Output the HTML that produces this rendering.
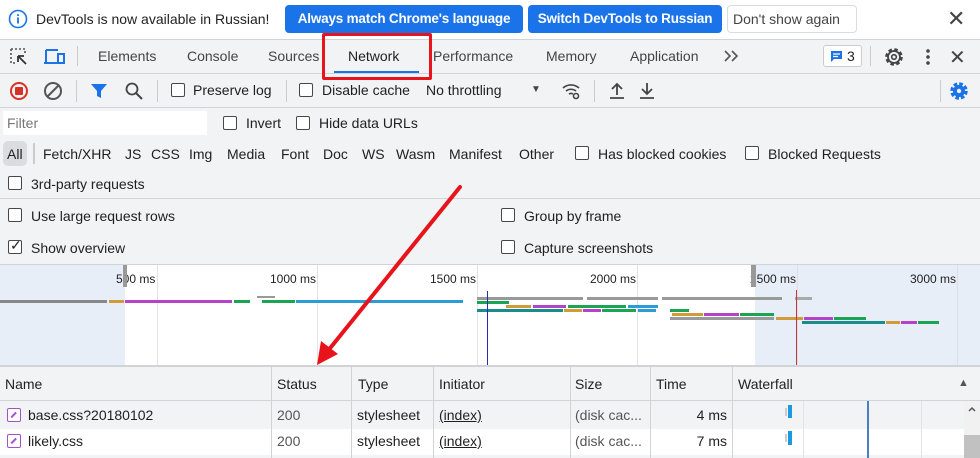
<!DOCTYPE html>
<html><head><meta charset="utf-8"><style>
*{box-sizing:border-box;margin:0;padding:0}
body{width:980px;height:458px;overflow:hidden;background:#f1f3f4;font-family:"Liberation Sans",sans-serif;font-size:14px;color:#1f1f1f;position:relative}
.a{position:absolute;white-space:nowrap}
.hl{position:absolute;left:0;width:980px;height:1px;background:#d0d3d7}
.cb{position:absolute;width:14px;height:14px;border:1.5px solid #474747;border-radius:2px;background:#fff}
.btn{position:absolute;top:5px;height:28px;border-radius:4px;background:#1a73e8;color:#fff;font-weight:bold;font-size:13.5px;line-height:28px;text-align:center;white-space:nowrap;overflow:hidden;letter-spacing:-0.2px}
.bar{position:absolute;height:3px}
.vl{position:absolute;width:1px}
</style></head><body>
<!-- infobar -->
<div class="a" style="left:0;top:0;width:980px;height:39px;background:#fff"></div>
<svg class="a" style="left:8px;top:9px" width="20" height="20" viewBox="0 0 20 20"><circle cx="10" cy="10" r="8.5" fill="none" stroke="#1a73e8" stroke-width="1.6"/><rect x="9.1" y="8.5" width="1.8" height="6" fill="#1a73e8"/><rect x="9.1" y="5.2" width="1.8" height="1.8" fill="#1a73e8"/></svg>
<div class="a" style="left:36px;top:11px">DevTools is now available in Russian!</div>
<div class="btn" style="left:285px;width:238px">Always match Chrome's language</div>
<div class="btn" style="left:528px;width:194px">Switch DevTools to Russian</div>
<div class="a" style="left:727px;top:5px;width:130px;height:28px;border:1px solid #dadce0;border-radius:4px;background:#fff;line-height:26px;padding-left:5px;color:#444">Don't show again</div>
<div class="a" style="left:947px;top:6px;font-size:22px;color:#444">✕</div>
<div class="hl" style="top:39px"></div>
<!-- tabs -->
<svg class="a" style="left:9px;top:47px" width="20" height="20" viewBox="0 0 20 20"><path d="M2 2h14v6M2 2v14h6" fill="none" stroke="#555" stroke-width="1.6" stroke-dasharray="2 2"/><path d="M17 17L9 9M9 9v6M9 9h6" fill="none" stroke="#333" stroke-width="1.8"/></svg>
<svg class="a" style="left:43px;top:48px" width="22" height="18" viewBox="0 0 22 18"><path d="M3 2h12M3 2v13M1 15h13" fill="none" stroke="#1a73e8" stroke-width="2"/><rect x="15" y="6" width="6" height="9" fill="none" stroke="#1a73e8" stroke-width="2"/></svg>
<div class="a" style="left:77px;top:46px;width:1px;height:20px;background:#ccc"></div>
<div class="a" style="left:98px;top:48px;color:#444">Elements</div>
<div class="a" style="left:187px;top:48px;color:#444">Console</div>
<div class="a" style="left:268px;top:48px;color:#444">Sources</div>
<div class="a" style="left:348px;top:48px;color:#1f1f1f">Network</div>
<div class="a" style="left:334px;top:71px;width:85px;height:2px;background:#1a73e8"></div>
<div class="a" style="left:433px;top:48px;color:#444">Performance</div>
<div class="a" style="left:546px;top:48px;color:#444">Memory</div>
<div class="a" style="left:630px;top:48px;color:#444">Application</div>
<svg class="a" style="left:723px;top:49px" width="18" height="14" viewBox="0 0 18 14"><path d="M2 2l5 5-5 5M9 2l5 5-5 5" fill="none" stroke="#555" stroke-width="1.6"/></svg>
<div class="a" style="left:823px;top:45px;width:39px;height:22px;border:1px solid #ccc;border-radius:3px;background:#fff"></div>
<svg class="a" style="left:830px;top:50px" width="13" height="13" viewBox="0 0 13 13"><path d="M1 1h11v8H4l-3 3z" fill="#1a73e8"/><path d="M3 4h7M3 6.5h5" stroke="#fff" stroke-width="1.2"/></svg>
<div class="a" style="left:847px;top:48px">3</div>
<div class="a" style="left:870px;top:46px;width:1px;height:20px;background:#ccc"></div>
<svg class="a" style="left:883px;top:46px" width="22" height="22" viewBox="0 0 22 22"><circle cx="11" cy="11" r="7.5" fill="none" stroke="#444" stroke-width="2.6" stroke-dasharray="3.5 2.4"/><circle cx="11" cy="11" r="6" fill="none" stroke="#444" stroke-width="1.8"/><circle cx="11" cy="11" r="2.3" fill="none" stroke="#444" stroke-width="1.6"/></svg>
<div class="a" style="left:926px;top:48px;width:4px;height:18px;background:radial-gradient(circle,#444 1.6px,transparent 2px) 0 0/4px 6px"></div>
<div class="a" style="left:949px;top:45px;font-size:20px;color:#444">✕</div>
<div class="hl" style="top:73px"></div>
<div class="a" style="left:322px;top:33px;width:110px;height:47px;border:3px solid #e8141b;border-radius:2px"></div>
<!-- toolbar -->
<svg class="a" style="left:9px;top:81px" width="20" height="20" viewBox="0 0 20 20"><circle cx="10" cy="10" r="8" fill="none" stroke="#d93025" stroke-width="2"/><rect x="6" y="6" width="8" height="8" rx="1" fill="#d93025"/></svg>
<svg class="a" style="left:43px;top:81px" width="20" height="20" viewBox="0 0 20 20"><circle cx="10" cy="10" r="8" fill="none" stroke="#555" stroke-width="2"/><path d="M4.5 15.5L15.5 4.5" stroke="#555" stroke-width="2"/></svg>
<div class="a" style="left:76px;top:80px;width:1px;height:22px;background:#ccc"></div>
<svg class="a" style="left:90px;top:82px" width="18" height="18" viewBox="0 0 18 18"><path d="M1 2h16l-6 7v7l-4 -2V9z" fill="#1a73e8"/></svg>
<svg class="a" style="left:124px;top:81px" width="20" height="20" viewBox="0 0 20 20"><circle cx="8" cy="8" r="5.5" fill="none" stroke="#444" stroke-width="1.8"/><path d="M12 12l6 6" stroke="#444" stroke-width="2"/></svg>
<div class="a" style="left:157px;top:80px;width:1px;height:22px;background:#ccc"></div>
<div class="cb" style="left:171px;top:83px"></div><div class="a" style="left:193px;top:82px">Preserve log</div>
<div class="a" style="left:286px;top:80px;width:1px;height:22px;background:#ccc"></div>
<div class="cb" style="left:299px;top:83px"></div><div class="a" style="left:322px;top:82px">Disable cache</div>
<div class="a" style="left:426px;top:82px">No throttling</div>
<div class="a" style="left:531px;top:84px;font-size:10px;color:#444">▼</div>
<svg class="a" style="left:561px;top:81px" width="22" height="20" viewBox="0 0 22 20"><path d="M2 7a12 12 0 0 1 16 0M5 10a8 8 0 0 1 10 0M8 13a4 4 0 0 1 4 0" fill="none" stroke="#444" stroke-width="1.6"/><circle cx="15" cy="15" r="2.5" fill="none" stroke="#444" stroke-width="1.6"/></svg>
<div class="a" style="left:594px;top:80px;width:1px;height:22px;background:#ccc"></div>
<svg class="a" style="left:608px;top:81px" width="18" height="20" viewBox="0 0 18 20"><path d="M9 14V3M4 8l5-5 5 5M2 17h14" fill="none" stroke="#444" stroke-width="1.8"/></svg>
<svg class="a" style="left:638px;top:81px" width="18" height="20" viewBox="0 0 18 20"><path d="M9 2v11M4 8l5 5 5-5M2 17h14" fill="none" stroke="#444" stroke-width="1.8"/></svg>
<div class="a" style="left:940px;top:80px;width:1px;height:22px;background:#ccc"></div>
<svg class="a" style="left:948px;top:80px" width="22" height="22" viewBox="0 0 22 22"><circle cx="11" cy="11" r="7" fill="none" stroke="#1a73e8" stroke-width="3.5" stroke-dasharray="3.5 2"/><circle cx="11" cy="11" r="6" fill="#1a73e8"/><circle cx="11" cy="11" r="2.2" fill="#f1f3f4"/></svg>
<div class="hl" style="top:107px"></div>
<!-- filter -->
<div class="a" style="left:3px;top:111px;width:204px;height:24px;background:#fff"></div>
<div class="a" style="left:7px;top:115px;color:#777">Filter</div>
<div class="cb" style="left:223px;top:116px"></div><div class="a" style="left:246px;top:115px">Invert</div>
<div class="cb" style="left:296px;top:116px"></div><div class="a" style="left:319px;top:115px">Hide data URLs</div>
<div class="a" style="left:3px;top:141px;width:24px;height:25px;background:#dadce0;border-radius:5px"></div>
<div class="a" style="left:7px;top:146px">All</div>
<div class="a" style="left:33px;top:143px;width:2px;height:21px;background:#ccc"></div>
<div class="a" style="left:43px;top:146px">Fetch/XHR</div>
<div class="a" style="left:125px;top:146px">JS</div>
<div class="a" style="left:151px;top:146px">CSS</div>
<div class="a" style="left:189px;top:146px">Img</div>
<div class="a" style="left:227px;top:146px">Media</div>
<div class="a" style="left:281px;top:146px">Font</div>
<div class="a" style="left:323px;top:146px">Doc</div>
<div class="a" style="left:362px;top:146px">WS</div>
<div class="a" style="left:396px;top:146px">Wasm</div>
<div class="a" style="left:449px;top:146px">Manifest</div>
<div class="a" style="left:519px;top:146px">Other</div>
<div class="cb" style="left:575px;top:146px"></div><div class="a" style="left:598px;top:146px">Has blocked cookies</div>
<div class="cb" style="left:745px;top:146px"></div><div class="a" style="left:768px;top:146px">Blocked Requests</div>
<div class="cb" style="left:8px;top:176px"></div><div class="a" style="left:31px;top:176px">3rd-party requests</div>
<div class="hl" style="top:198px"></div>
<div class="cb" style="left:8px;top:208px"></div><div class="a" style="left:31px;top:208px">Use large request rows</div>
<div class="cb" style="left:8px;top:240px"></div><div class="a" style="left:10px;top:237px;font-size:14px">✓</div><div class="a" style="left:31px;top:240px">Show overview</div>
<div class="cb" style="left:501px;top:208px"></div><div class="a" style="left:524px;top:208px">Group by frame</div>
<div class="cb" style="left:501px;top:240px"></div><div class="a" style="left:524px;top:240px">Capture screenshots</div>
<div class="hl" style="top:264px"></div>
<!-- overview -->
<div class="a" style="left:0;top:265px;width:980px;height:101px;background:#fff"></div>
<div class="a" style="left:0;top:265px;width:125px;height:101px;background:#e8eef8"></div>
<div class="a" style="left:755px;top:265px;width:225px;height:101px;background:#e8eef8"></div>
<div class="vl" style="left:157px;top:265px;height:101px;background:#e3e3e3"></div>
<div class="vl" style="left:317px;top:265px;height:101px;background:#e3e3e3"></div>
<div class="vl" style="left:477px;top:265px;height:101px;background:#e3e3e3"></div>
<div class="vl" style="left:637px;top:265px;height:101px;background:#e3e3e3"></div>
<div class="vl" style="left:797px;top:265px;height:101px;background:#dcdfe6"></div>
<div class="vl" style="left:957px;top:265px;height:101px;background:#dcdfe6"></div>
<div class="a" style="left:116px;top:272px;font-size:12px">500 ms</div>
<div class="a" style="left:270px;top:272px;font-size:12px">1000 ms</div>
<div class="a" style="left:430px;top:272px;font-size:12px">1500 ms</div>
<div class="a" style="left:590px;top:272px;font-size:12px">2000 ms</div>
<div class="a" style="left:750px;top:272px;font-size:12px">2500 ms</div>
<div class="a" style="left:910px;top:272px;font-size:12px">3000 ms</div>
<div class="a" style="left:123px;top:265px;width:4px;height:22px;background:#999"></div>
<div class="a" style="left:751px;top:265px;width:5px;height:22px;background:#999"></div>
<div class="bar" style="left:0;top:300px;width:107px;background:#888"></div>
<div class="bar" style="left:109px;top:300px;width:15px;background:#d19a3a"></div>
<div class="bar" style="left:125px;top:300px;width:107px;background:#b543c9"></div>
<div class="bar" style="left:234px;top:300px;width:16px;background:#1aa454"></div>
<div class="bar" style="left:257px;top:296px;width:18px;height:2px;background:#999"></div>
<div class="bar" style="left:262px;top:300px;width:33px;background:#1aa454"></div>
<div class="bar" style="left:296px;top:300px;width:167px;background:#2d9bd6"></div>
<div class="bar" style="left:477px;top:297px;width:106px;background:#999"></div>
<div class="bar" style="left:587px;top:297px;width:71px;background:#999"></div>
<div class="bar" style="left:662px;top:297px;width:120px;background:#999"></div>
<div class="bar" style="left:795px;top:297px;width:17px;background:#aaa"></div>
<div class="bar" style="left:477px;top:301px;width:32px;background:#1aa454"></div>
<div class="bar" style="left:506px;top:305px;width:25px;background:#d19a3a"></div>
<div class="bar" style="left:533px;top:305px;width:33px;background:#b543c9"></div>
<div class="bar" style="left:568px;top:305px;width:58px;background:#1aa454"></div>
<div class="bar" style="left:628px;top:305px;width:30px;background:#2d9bd6"></div>
<div class="bar" style="left:477px;top:309px;width:86px;background:#1a8c8c"></div>
<div class="bar" style="left:564px;top:309px;width:18px;background:#d19a3a"></div>
<div class="bar" style="left:583px;top:309px;width:18px;background:#b543c9"></div>
<div class="bar" style="left:602px;top:309px;width:34px;background:#1aa454"></div>
<div class="bar" style="left:638px;top:309px;width:18px;background:#2d9bd6"></div>
<div class="bar" style="left:670px;top:309px;width:19px;background:#1aa454"></div>
<div class="bar" style="left:672px;top:313px;width:31px;background:#d19a3a"></div>
<div class="bar" style="left:704px;top:313px;width:35px;background:#b543c9"></div>
<div class="bar" style="left:740px;top:313px;width:34px;background:#1aa454"></div>
<div class="bar" style="left:670px;top:317px;width:104px;background:#999"></div>
<div class="bar" style="left:776px;top:317px;width:27px;background:#d19a3a"></div>
<div class="bar" style="left:804px;top:317px;width:29px;background:#b543c9"></div>
<div class="bar" style="left:834px;top:317px;width:32px;background:#1aa454"></div>
<div class="bar" style="left:802px;top:321px;width:83px;background:#1a8c8c"></div>
<div class="bar" style="left:886px;top:321px;width:14px;background:#d19a3a"></div>
<div class="bar" style="left:901px;top:321px;width:16px;background:#b543c9"></div>
<div class="bar" style="left:918px;top:321px;width:21px;background:#1aa454"></div>
<div class="vl" style="left:487px;top:291px;height:75px;background:#2a2ab8"></div>
<div class="vl" style="left:796px;top:290px;height:76px;background:#c0393b"></div>
<div class="a" style="left:0;top:365px;width:980px;height:2px;background:#d0d3d7"></div>
<!-- table header -->
<div class="a" style="left:0;top:367px;width:980px;height:34px;background:#f1f3f4"></div>
<div class="hl" style="top:400px"></div>
<div class="a" style="left:5px;top:376px">Name</div>
<div class="a" style="left:277px;top:376px">Status</div>
<div class="a" style="left:358px;top:376px">Type</div>
<div class="a" style="left:439px;top:376px">Initiator</div>
<div class="a" style="left:575px;top:376px">Size</div>
<div class="a" style="left:656px;top:376px">Time</div>
<div class="a" style="left:738px;top:376px">Waterfall</div>
<div class="a" style="left:958px;top:377px;font-size:11px;color:#555">▲</div>
<!-- rows -->
<div class="a" style="left:0;top:401px;width:964px;height:28px;background:#f1f3f4"></div>
<div class="a" style="left:0;top:429px;width:964px;height:26px;background:#fff"></div>
<div class="a" style="left:0;top:455px;width:964px;height:3px;background:#f1f3f4"></div>
<div class="a" style="left:7px;top:408px;width:14px;height:14px;border:1.5px solid #a450c8;border-radius:2px;background:#fff"></div>
<div class="a" style="left:10px;top:414px;width:7px;height:1.5px;background:#a450c8;transform:rotate(-45deg)"></div>
<div class="a" style="left:7px;top:434px;width:14px;height:14px;border:1.5px solid #a450c8;border-radius:2px;background:#fff"></div>
<div class="a" style="left:10px;top:440px;width:7px;height:1.5px;background:#a450c8;transform:rotate(-45deg)"></div>
<div class="a" style="left:28px;top:407px">base.css?20180102</div>
<div class="a" style="left:28px;top:433px">likely.css</div>
<div class="a" style="left:277px;top:407px;color:#555">200</div>
<div class="a" style="left:277px;top:433px;color:#555">200</div>
<div class="a" style="left:357px;top:407px">stylesheet</div>
<div class="a" style="left:357px;top:433px">stylesheet</div>
<div class="a" style="left:439px;top:407px;text-decoration:underline">(index)</div>
<div class="a" style="left:439px;top:433px;text-decoration:underline">(index)</div>
<div class="a" style="left:575px;top:407px;color:#555">(disk cac...</div>
<div class="a" style="left:575px;top:433px;color:#555">(disk cac...</div>
<div class="a" style="left:690px;top:407px;width:37px;text-align:right">4 ms</div>
<div class="a" style="left:690px;top:433px;width:37px;text-align:right">7 ms</div>
<!-- col lines -->
<div class="vl" style="left:271px;top:367px;height:91px;background:#d0d3d7"></div>
<div class="vl" style="left:351px;top:367px;height:91px;background:#d0d3d7"></div>
<div class="vl" style="left:433px;top:367px;height:91px;background:#d0d3d7"></div>
<div class="vl" style="left:570px;top:367px;height:91px;background:#d0d3d7"></div>
<div class="vl" style="left:650px;top:367px;height:91px;background:#d0d3d7"></div>
<div class="vl" style="left:732px;top:367px;height:91px;background:#d0d3d7"></div>
<div class="vl" style="left:803px;top:401px;height:57px;background:#e3e3e3"></div>
<div class="vl" style="left:921px;top:401px;height:57px;background:#e3e3e3"></div>
<div class="a" style="left:867px;top:401px;width:2px;height:57px;background:#4a7fc1"></div>
<div class="a" style="left:788px;top:405px;width:4px;height:13px;background:#1a9be0"></div>
<div class="a" style="left:785px;top:408px;width:2px;height:8px;border:1px solid #ccc"></div>
<div class="a" style="left:788px;top:431px;width:4px;height:14px;background:#1a9be0"></div>
<div class="a" style="left:785px;top:434px;width:2px;height:8px;border:1px solid #ccc"></div>
<div class="a" style="left:964px;top:401px;width:16px;height:57px;background:#f1f1f1"></div>
<div class="a" style="left:964px;top:435px;width:16px;height:23px;background:#c1c1c1"></div>
<svg class="a" style="left:967px;top:405px" width="10" height="8" viewBox="0 0 10 8"><path d="M2 6l3-3 3 3" fill="none" stroke="#555" stroke-width="1.5"/></svg>
<!-- red arrow -->
<svg class="a" style="left:0;top:0" width="980" height="458" viewBox="0 0 980 458"><path d="M460 187L327 352" stroke="#e8141b" stroke-width="4" stroke-linecap="round"/><path d="M317 365l4-24 17 13z" fill="#e8141b"/></svg>
</body></html>
